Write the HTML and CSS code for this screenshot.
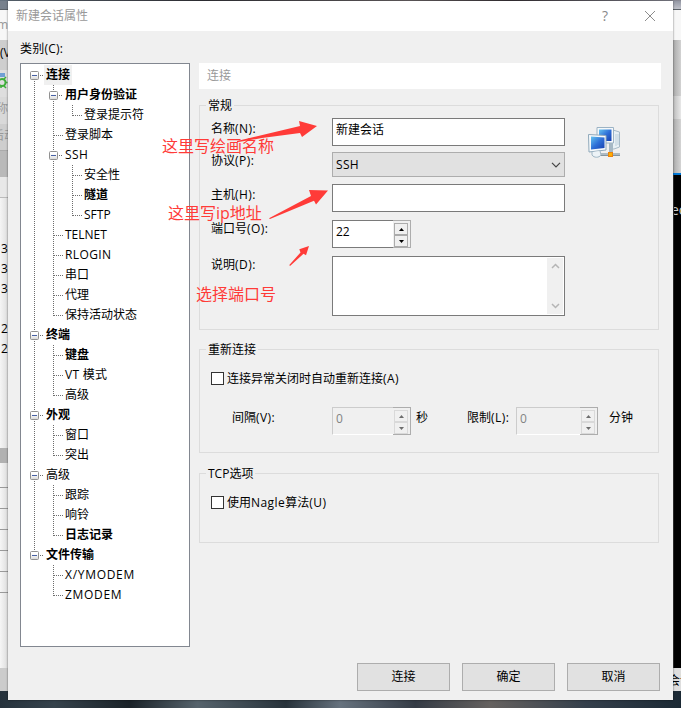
FILE: index.html
```html
<!DOCTYPE html>
<html lang="zh-CN">
<head>
<meta charset="utf-8">
<title>新建会话属性</title>
<link rel="stylesheet" href="styles.css">
</head>
<body>
<svg class="defs" aria-hidden="true">
  <defs>
    <linearGradient id="boxfill" x1="0" y1="0" x2="0" y2="1"><stop offset="0.3" stop-color="#fff"/><stop offset="1" stop-color="#d8d8d8"/></linearGradient>
    <linearGradient id="screen" x1="0" y1="0" x2="1" y2="1"><stop offset="0" stop-color="#65c4ef"/><stop offset="0.5" stop-color="#2f70d8"/><stop offset="1" stop-color="#1740ae"/></linearGradient>
    <symbol id="v" viewBox="0 0 19 20"><path class="dots" d="M9.5 0V20"/></symbol>
    <symbol id="tee" viewBox="0 0 19 20"><path class="dots" d="M9.5 0V20M10 10.5H19"/></symbol>
    <symbol id="end" viewBox="0 0 19 20"><path class="dots" d="M9.5 0V11M10 10.5H19"/></symbol>
    <symbol id="minus" viewBox="0 0 19 20"><rect x="5.5" y="6.5" width="8" height="8" rx="1" fill="url(#boxfill)" stroke="#919191"/><path d="M7 10.5H12" stroke="#4661a5"/><path class="dots" d="M15 10.5H19"/></symbol>
    <symbol id="first" viewBox="0 0 19 20"><path class="dots" d="M9.5 16V20"/><use href="#minus" width="19" height="20"/></symbol>
    <symbol id="mid" viewBox="0 0 19 20"><path class="dots" d="M9.5 0V20"/><use href="#minus" width="19" height="20"/></symbol>
    <symbol id="last" viewBox="0 0 19 20"><path class="dots" d="M9.5 0V6"/><use href="#minus" width="19" height="20"/></symbol>
  </defs>
</svg>
<div class="desktop">
  <div class="strip left">
    <div class="sky"></div>
    <div class="caption">m</div>
    <div class="menu">(V</div>
    <div class="tools"><svg width="8" height="18" viewBox="0 0 8 18"><path d="M0 1H5V5H0z" fill="#6fa0d4"/><circle cx="2" cy="10.500" r="3.500" fill="none" stroke="#3fae3a" stroke-width="2"/><path d="M5 10.500H7.500M4 7L6 5M4 14L6 16M1 14V16" stroke="#3fae3a" stroke-width="1.500"/></svg></div>
    <div class="faint">称</div>
    <div class="faint low">后动</div>
    <div class="bar"></div>
    <div class="head"></div>
    <div class="nums"><span>3</span><span>3</span><span>3</span><span></span><span>2</span><span>2</span></div>
    <div class="scroll"></div>
    <div class="table"></div>
    <div class="status"></div>
    <div class="dark"></div>
  </div>

  <main class="dialog">
    <header class="titlebar">
      <span class="title">新建会话属性</span>
      <span class="help">?</span>
      <svg width="12" height="12" viewBox="0 0 12 12"><path d="M1 1L11 11M11 1L1 11" stroke="#8c8c8c" fill="none"/></svg>
    </header>
    <div class="category">类别(C):</div>
    <div class="content">
      <div class="tree">
        <div class="row"><svg><use href="#first"/></svg><b class="selected">连接</b></div>
        <div class="row"><svg><use href="#v"/></svg><svg><use href="#mid"/></svg><b>用户身份验证</b></div>
        <div class="row"><svg><use href="#v"/></svg><svg><use href="#v"/></svg><svg><use href="#end"/></svg><span>登录提示符</span></div>
        <div class="row"><svg><use href="#v"/></svg><svg><use href="#tee"/></svg><span>登录脚本</span></div>
        <div class="row"><svg><use href="#v"/></svg><svg><use href="#mid"/></svg><span class="latin">SSH</span></div>
        <div class="row"><svg><use href="#v"/></svg><svg><use href="#v"/></svg><svg><use href="#tee"/></svg><span>安全性</span></div>
        <div class="row"><svg><use href="#v"/></svg><svg><use href="#v"/></svg><svg><use href="#tee"/></svg><b>隧道</b></div>
        <div class="row"><svg><use href="#v"/></svg><svg><use href="#v"/></svg><svg><use href="#end"/></svg><span>SFTP</span></div>
        <div class="row"><svg><use href="#v"/></svg><svg><use href="#tee"/></svg><span>TELNET</span></div>
        <div class="row"><svg><use href="#v"/></svg><svg><use href="#tee"/></svg><span class="latin">RLOGIN</span></div>
        <div class="row"><svg><use href="#v"/></svg><svg><use href="#tee"/></svg><span>串口</span></div>
        <div class="row"><svg><use href="#v"/></svg><svg><use href="#tee"/></svg><span>代理</span></div>
        <div class="row"><svg><use href="#v"/></svg><svg><use href="#end"/></svg><span>保持活动状态</span></div>
        <div class="row"><svg><use href="#mid"/></svg><b>终端</b></div>
        <div class="row"><svg><use href="#v"/></svg><svg><use href="#tee"/></svg><b>键盘</b></div>
        <div class="row"><svg><use href="#v"/></svg><svg><use href="#tee"/></svg><span class="mode">VT 模式</span></div>
        <div class="row"><svg><use href="#v"/></svg><svg><use href="#end"/></svg><span>高级</span></div>
        <div class="row"><svg><use href="#mid"/></svg><b>外观</b></div>
        <div class="row"><svg><use href="#v"/></svg><svg><use href="#tee"/></svg><span>窗口</span></div>
        <div class="row"><svg><use href="#v"/></svg><svg><use href="#end"/></svg><span>突出</span></div>
        <div class="row"><svg><use href="#mid"/></svg><span>高级</span></div>
        <div class="row"><svg><use href="#v"/></svg><svg><use href="#tee"/></svg><span>跟踪</span></div>
        <div class="row"><svg><use href="#v"/></svg><svg><use href="#tee"/></svg><span>响铃</span></div>
        <div class="row"><svg><use href="#v"/></svg><svg><use href="#end"/></svg><b>日志记录</b></div>
        <div class="row"><svg><use href="#last"/></svg><b>文件传输</b></div>
        <div class="row"><svg></svg><svg><use href="#tee"/></svg><span class="modem">X/YMODEM</span></div>
        <div class="row"><svg></svg><svg><use href="#end"/></svg><span class="modem">ZMODEM</span></div>
      </div>

      <div class="panel">
        <div class="heading">连接</div>
        <section class="group general">
          <h2>常规</h2>
          <div class="fields">
            <label>名称<em>(N):</em></label><div class="input">新建会话</div>
            <label class="protocol">协议<em>(P):</em></label><div class="select">SSH<svg width="10" height="6" viewBox="0 0 10 6"><path d="M1 .8L5 4.800L9 .8" fill="none" stroke="#444" stroke-width="1.200"/></svg></div>
            <label>主机<em>(H):</em></label><div class="input"></div>
            <label class="port">端口号<em>(O):</em></label>
            <div class="spin"><span>22</span><div class="steps"><i><svg width="5" height="3"><path d="M0 3L2.500 0L5 3z"/></svg></i><i><svg width="5" height="3"><path d="M0 0L2.500 3L5 0z"/></svg></i></div></div>
            <label class="desc">说明<em>(D):</em></label>
            <div class="textarea"><div class="track"><svg width="9" height="6" viewBox="0 0 9 6"><path d="M1 5L4.500 1.500L8 5"/></svg><svg width="9" height="6" viewBox="0 0 9 6"><path d="M1 1L4.500 4.500L8 1"/></svg></div></div>
          </div>
          <svg class="computers" width="34" height="34" viewBox="0 0 34 34">
            <path d="M25 4L31.500 6V21L26 23H23V4z" fill="#e8f0f5" stroke="#a6bac8"/>
            <path d="M28 8V20M30 8V19" stroke="#bdd0dc"/>
            <path d="M9 1.500H25.500V17H9z" fill="#f5f8fa" stroke="#9cb3c4"/>
            <path d="M11 3.500H23.500V15H11z" fill="url(#screen)"/>
            <path d="M21 17H25V26H21z" fill="#a5b8c5"/>
            <path d="M.5 8.500L18 9.500V24L1 26z" fill="#f7fafc" stroke="#8fa8ba"/>
            <path d="M3 10.500L16.500 11.500V22L3 23.500z" fill="url(#screen)"/>
            <path d="M4 26L4 29C6 32 11 32 13 29L12 25" fill="#edf3f7" stroke="#9eb5c4"/>
            <path d="M13 28.500H32" stroke="#8495a0" stroke-width="3"/><path d="M13 28H32" stroke="#d8e1e7"/>
            <rect x="20.500" y="26.500" width="4" height="4" fill="#ffb000" stroke="#e98212"/>
          </svg>
        </section>
        <section class="group reconnect">
          <h2>重新连接</h2>
          <div class="check"><i></i><span>连接异常关闭时自动重新连接<em>(A)</em></span></div>
          <div class="limits">
            <label class="interval">间隔<em>(V):</em></label>
            <div class="spin off"><span>0</span><div class="steps"><i><svg width="5" height="3"><path d="M0 3L2.500 0L5 3z"/></svg></i><i><svg width="5" height="3"><path d="M0 0L2.500 3L5 0z"/></svg></i></div></div>
            <label class="seconds">秒</label>
            <label class="limit">限制<em>(L):</em></label>
            <div class="spin off wide"><span>0</span><div class="steps"><i><svg width="5" height="3"><path d="M0 3L2.500 0L5 3z"/></svg></i><i><svg width="5" height="3"><path d="M0 0L2.500 3L5 0z"/></svg></i></div></div>
            <label class="minutes">分钟</label>
          </div>
        </section>
        <section class="group tcp">
          <h2>TCP选项</h2>
          <div class="check"><i></i><span>使用<em>Nagle</em>算法<em>(U)</em></span></div>
        </section>
      </div>
    </div>
    <footer class="actions">
      <div class="button">连接</div><div class="button">确定</div><div class="button">取消</div>
    </footer>
  </main>

  <div class="strip right">
    <div class="sky"></div>
    <div class="caption"></div>
    <div class="toolbar"></div>
    <div class="tab"></div>
    <div class="toolbar2"></div>
    <div class="terminal">ec</div>
    <div class="status">会话</div>
    <div class="dark"></div>
  </div>

  <div class="note name">这里写绘画名称</div>
  <div class="note host">这里写ip地址</div>
  <div class="note portno">选择端口号</div>
  <svg class="arrows" width="681" height="708" viewBox="0 0 681 708">
    <path d="M237 141L300 126L299 121L317 126L302 137L300 133L262 138L237 142.300z"/>
    <path d="M269 218.300L311 196L309 190L328 190.500L316 204.500L314 200.700L270 219z"/>
    <path d="M289.300 265L300.500 252.500L299.300 249.300L309 246L306 255.200L303.500 253.800L290 266z"/>
  </svg>
</div>
</body>
</html>
```
FILE: styles.css
```css
* { box-sizing: border-box; }
body {
  margin: 0;
  font: 12px/20px "Open Sans", "Noto Sans CJK SC", sans-serif;
  color: #000;
  overflow: hidden;
}
svg { display: block; flex: none; }
em { font-style: normal; letter-spacing: .45px; }
.defs { position: absolute; width: 0; height: 0; }
.dots { fill: none; stroke: #6d6d6d; stroke-dasharray: 1 1; }

.desktop {
  position: relative;
  display: flex;
  width: 681px;
  height: 708px;
  overflow: hidden;
  background: linear-gradient(90deg, #26323c, #35424b 8%, #1a2228 19%, #56636c 29%, #27323a 42%, #66727e 50%, #343b45 61%, #65615f 72%, #343f4b 86%, #1b2934);
}
.desktop::before {
  content: "";
  position: absolute;
  width: 100%;
  height: 1px;
  background: linear-gradient(90deg, #66727f, #35353b 30%, #6c6668 60%, #393338 75%, #8b8c97);
}

/* Edges of the window behind the dialog */
.strip { width: 8px; height: 708px; display: flex; flex-direction: column; overflow: hidden; white-space: nowrap; }
.strip > div { flex: none; overflow: hidden; }
.sky { height: 10px; background: #78818d; border-bottom: 1px solid #5c6269; }
.strip .caption { height: 30px; background: #f7f7f7; color: #999; line-height: 30px; }
.left .caption { text-indent: -3px; }
.menu { height: 30px; background: #cecece; line-height: 26px; }
.tools { height: 27px; padding-top: 2px; background: #dedede; }
.faint { height: 27px; background: #d9d9d9; color: #999; line-height: 23px; text-indent: -4px; }
.faint.low { height: 26px; background: #cecece; text-indent: -8px; }
.bar { height: 27px; background: #b9b9b9; border-top: 1px solid #aaa; }
.head { height: 21px; background: #e8e8e8; border-bottom: 1px solid #bbb; }
.nums { height: 250px; padding-top: 41px; background: linear-gradient(90deg, #f5f5f5, #dedede); text-indent: 1px; }
.nums span { display: block; height: 20px; }
.scroll { height: 15px; background: #b1b1b1; }
.table { height: 205px; background: linear-gradient(90deg, #f6f6f6, #ddd); }
.table::before {
  content: "";
  display: block;
  height: 131px;
  margin-top: 4px;
  background: repeating-linear-gradient(#0000 0 20px, #999 20px 21px);
}
.strip .status { height: 23px; background: #ccc; }
.dark { height: 17px; }
.right .sky { background: linear-gradient(#8e929f, #c0c2ca); }
.toolbar { height: 56px; background: linear-gradient(90deg, #aaa, #d2d2d2); }
.tab { height: 23px; background: linear-gradient(90deg, #bbb, #e8e8e8); }
.toolbar2 { height: 56px; background: linear-gradient(90deg, #aaa, #d4d4d4); border-bottom: 2px solid #0078d7; }
.terminal { height: 493px; background: #000; border-left: 1px solid #333; color: #ccc; font-size: 14px; line-height: 70px; text-indent: -3px; }
.right .status { background: #dedede; text-indent: -5px; line-height: 25px; }

.dialog { width: 665px; height: 699px; margin-top: 1px; background: #f0f0f0; box-shadow: 0 0 2px #0008; z-index: 1; }
.titlebar { height: 30px; display: flex; align-items: center; padding: 0 17px 0 8px; background: #fff; color: #999; }
.title { flex: 1; }
.help { width: 11px; margin-right: 31px; font-size: 14px; line-height: 18px; color: #888; }
.category { height: 32px; padding: 8px 12px 0; letter-spacing: .2px; }
.content { display: flex; gap: 9px; padding-left: 12px; }
.tree { width: 170px; height: 584px; padding: 1px 0 0 4px; border: 1px solid #828790; background: #fff; }
.row { display: flex; height: 20px; }
.row svg { width: 19px; height: 20px; }
.row b, .row span { padding: 0 2px; line-height: 19px; white-space: nowrap; }
.row .selected { background: #f0f0f0; }
.row .latin { letter-spacing: .4px; }
.row .modem { letter-spacing: .7px; }
.row .mode { letter-spacing: .3px; }

.panel { width: 462px; }
.heading { height: 26px; padding-left: 8px; line-height: 26px; background: #fff; color: #999; }
.group { width: 460px; border: 1px solid #dcdcdc; }
.group h2 { width: max-content; height: 20px; margin: -11px 0 0 6px; padding: 0 2px; background: #f0f0f0; font: inherit; line-height: 22px; }
.general { display: flex; flex-wrap: wrap; align-content: flex-start; height: 225px; margin-top: 16px; }
.general h2 { margin-right: 380px; }
.fields {
  display: grid;
  grid-template-columns: 121px 233px;
  grid-template-rows: 34px 32px 36px 36px 60px;
  padding: 3px 0 0 11px;
}
.fields label { padding-top: 1px; }
.fields .protocol { padding-top: 0; margin-top: -1px; }
.fields .port, .fields .desc { padding-top: 0; margin-top: -1px; }
.input { height: 28px; padding: 1px 3px; border: 1px solid #7a7a7a; background: #fff; }
.select { display: flex; align-items: center; justify-content: space-between; height: 25px; padding: 0 3px; border: 1px solid #adadad; background: #e1e1e1; letter-spacing: .3px; }
.computers { margin: 11px 0 0 23px; }
.spin { display: flex; width: 79px; height: 28px; border: 1px solid #7a7a7a; border-right-color: #adadad; background: #fff; }
.spin > span { flex: 1; padding: 1px 3px; }
.steps { width: 18px; height: 28px; margin: -1px -1px 0 0; padding: 2px 2px 2px 1px; border: 1px solid #adadad; border-left: 0; background: #f0f0f0; }
.steps i { display: flex; align-items: center; justify-content: center; height: 12px; border: 1px solid #acacac; background: #f0f0f0; }
.spin.off { border-color: #ccc #adadad #fff #ccc; background: #f0f0f0; color: #838383; }
.off .steps i { border-color: #d9d9d9; fill: #6d6d6d; }
.spin.wide { width: 82px; }
.textarea { height: 60px; display: flex; justify-content: flex-end; padding: 1px; border: 1px solid #7a7a7a; background: #fff; }
.track { width: 16px; display: flex; flex-direction: column; justify-content: space-between; align-items: center; padding: 5px 0; background: #f0f0f0; }
.track path { fill: none; stroke: #b5b5b5; stroke-width: 1.5; }

.reconnect { height: 104px; margin-top: 19px; }
.check { display: flex; align-items: center; gap: 3px; height: 20px; margin: 10px 0 0 11px; }
.check i { width: 13px; height: 13px; margin-bottom: 2px; border: 1px solid #333; background: #fff; }
.limits { display: flex; margin: 18px 0 0 32px; white-space: nowrap; }
.limits label { padding-top: 1px; }
.interval { width: 100px; }
.limits .seconds { width: 51px; padding-left: 5px; }
.limits .limit { width: 54px; padding-left: 5px; }
.limits .minutes { padding-left: 11px; }
.tcp { height: 70px; margin-top: 20px; }
.actions { display: flex; justify-content: flex-end; gap: 12px; padding: 16px 13px 0 0; }
.button { width: 93px; height: 28px; border: 1px solid #adadad; background: #e1e1e1; text-align: center; line-height: 26px; }

/* Callouts drawn over the dialog */
.note { position: absolute; z-index: 2; color: #ff3b38; font-size: 16px; line-height: 24px; white-space: nowrap; }
.name { left: 162px; top: 134px; }
.host { left: 168px; top: 201px; }
.portno { left: 196px; top: 282px; }
.arrows { position: absolute; z-index: 2; top: 0; left: 0; fill: #ff3b38; pointer-events: none; }
```
